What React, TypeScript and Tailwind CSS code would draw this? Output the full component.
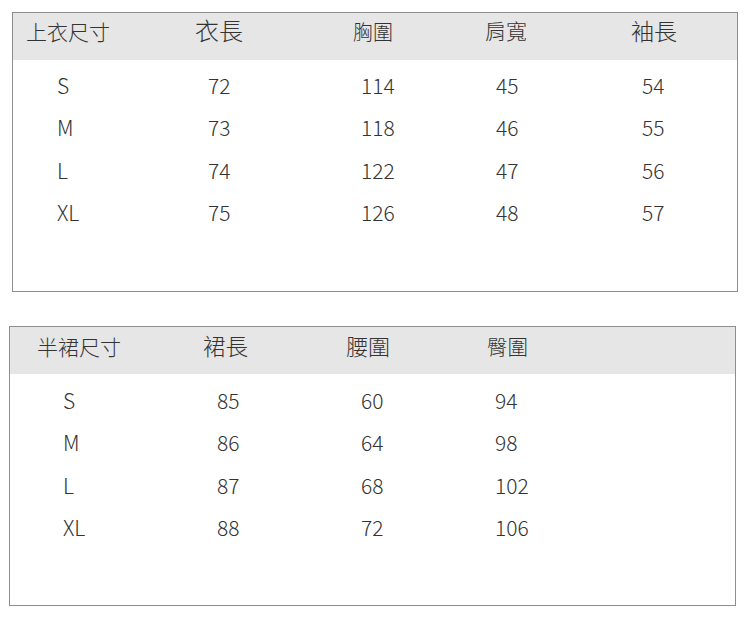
import React from "react";

const font = { fontFamily: '"Noto Sans CJK TC", "Noto Sans", sans-serif' };

function Table1() {
  const rows = [
    ["S", "72", "114", "45", "54"],
    ["M", "73", "118", "46", "55"],
    ["L", "74", "122", "47", "56"],
    ["XL", "75", "126", "48", "57"],
  ];
  return (
    <div className="ml-[12px] mt-[12px] h-[280px] w-[726px] border border-[#8e8e8e] bg-white">
      <div className="grid h-[47px] grid-cols-[169px_158px_132px_146px_1fr] bg-[#e6e6e6] pl-[13px] font-light text-[#333333]">
        <div className="mt-[8px] text-[21px] leading-none">上衣尺寸</div>
        <div className="mt-[5px] text-[24px] leading-none">衣長</div>
        <div className="mt-[9px] text-[20px] leading-none">胸圍</div>
        <div className="mt-[7px] text-[21px] leading-none">肩寬</div>
        <div className="mt-[6px] text-[23px] leading-none">袖長</div>
      </div>
      <div className="pt-[4px]">
        {rows.map((r) => (
          <div
            key={r[0]}
            className="grid h-[42.5px] grid-cols-[151px_153px_135px_146px_1fr] items-center pl-[44px] text-[21px] font-light leading-none text-[#333333]"
          >
            {r.map((c, i) => (
              <div key={i}>{c}</div>
            ))}
          </div>
        ))}
      </div>
    </div>
  );
}

function Table2() {
  const rows = [
    ["S", "85", "60", "94"],
    ["M", "86", "64", "98"],
    ["L", "87", "68", "102"],
    ["XL", "88", "72", "106"],
  ];
  return (
    <div className="ml-[9px] mt-[34px] h-[280px] w-[727px] border border-[#8e8e8e] bg-white">
      <div className="grid h-[47px] grid-cols-[166px_143px_141px_1fr] bg-[#e6e6e6] pl-[27px] font-light text-[#333333]">
        <div className="mt-[9px] text-[21px] leading-none">半裙尺寸</div>
        <div className="mt-[7px] text-[22.5px] leading-none">裙長</div>
        <div className="mt-[7px] text-[22px] leading-none">腰圍</div>
        <div className="mt-[9px] text-[20.5px] leading-none">臀圍</div>
      </div>
      <div className="pt-[5px]">
        {rows.map((r) => (
          <div
            key={r[0]}
            className="grid h-[42.5px] grid-cols-[154px_144px_134px_1fr] items-center pl-[53px] text-[21px] font-light leading-none text-[#333333]"
          >
            {r.map((c, i) => (
              <div key={i}>{c}</div>
            ))}
          </div>
        ))}
      </div>
    </div>
  );
}

export default function App() {
  return (
    <div className="h-[624px] w-[750px] overflow-hidden bg-white pt-px" style={font}>
      <div className="-mt-px">
        <Table1 />
        <Table2 />
      </div>
    </div>
  );
}
